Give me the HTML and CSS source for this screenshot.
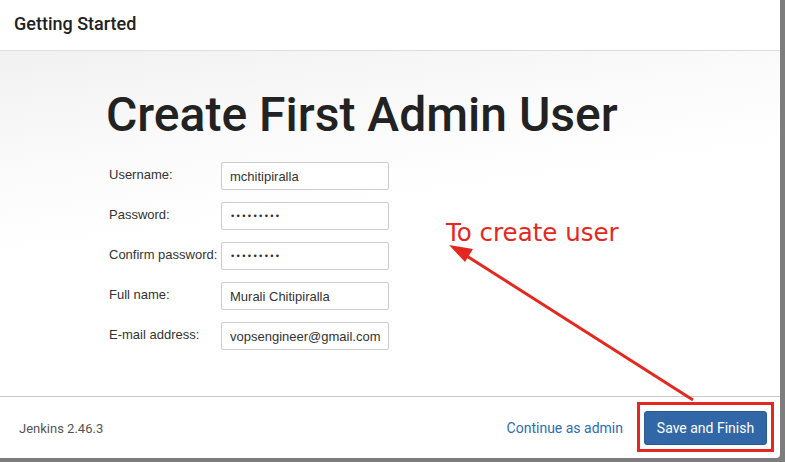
FILE: index.html
```html
<!DOCTYPE html>
<html>
<head>
<meta charset="utf-8">
<link rel="stylesheet" href="styles.css">
</head>
<body>
<div class="dialog">
  <div class="header">Getting Started</div>
  <div class="content">
    <h1 class="title">Create First Admin User</h1>
    <div class="form">
      <div class="row"><label>Username:</label><div class="input">mchitipiralla</div></div>
      <div class="row"><label>Password:</label><div class="input dots">•••••••••</div></div>
      <div class="row"><label>Confirm password:</label><div class="input dots">•••••••••</div></div>
      <div class="row"><label>Full name:</label><div class="input">Murali Chitipiralla</div></div>
      <div class="row"><label>E-mail address:</label><div class="input">vopsengineer@gmail.com</div></div>
    </div>
  </div>
  <div class="footer">
    <span class="version">Jenkins 2.46.3</span>
    <span class="spacer"></span>
    <a class="link">Continue as admin</a>
    <button class="btn">Save and Finish</button>
  </div>
</div>
<div class="note">To create user</div>
<svg class="overlay" width="785" height="462" viewBox="0 0 785 462">
  <rect x="638.5" y="403.5" width="134" height="47" fill="none" stroke="#e5281f" stroke-width="3"/>
  <line x1="693" y1="400" x2="462" y2="253" stroke="#e5281f" stroke-width="3"/>
  <polygon points="449,245 473,249 465,262" fill="#e5281f"/>
</svg>
</body>
</html>
```
FILE: styles.css
```css
html, body {
  margin: 0;
  padding: 0;
}
body {
  width: 785px;
  height: 462px;
  background: #7d7d7d;
  position: relative;
  overflow: hidden;
  font-family: "Liberation Sans", Arial, sans-serif;
}
.dialog {
  width: 780px;
  height: 458px;
  background: #fff;
  display: flex;
  flex-direction: column;
  border-bottom-right-radius: 4px;
  overflow: hidden;
}
.header {
  height: 51px;
  box-sizing: border-box;
  border-bottom: 1px solid #dedede;
  font-family: Roboto, sans-serif;
  font-weight: 500;
  font-size: 18px;
  color: #222;
  padding: 13px 0 0 14px;
  flex: none;
}
.content {
  flex: 1;
  background: linear-gradient(172deg, #f1f1f1 0%, #fafafa 25%, #ffffff 45%);
  padding: 0 0 0 107px;
  border-bottom: 1px solid #c8c8c8;
}
.title {
  margin: 35px 0 0 -1px;
  font-family: Roboto, sans-serif;
  font-weight: 500;
  font-size: 48px;
  line-height: 58px;
  color: #222;
  letter-spacing: 0;
}
.form {
  margin-top: 18px;
  display: flex;
  flex-direction: column;
  gap: 12px;
}
.row {
  display: flex;
  align-items: flex-start;
  height: 28px;
}
.row label {
  width: 112px;
  padding-left: 2px;
  font-size: 13px;
  color: #333;
  padding-top: 5px;
}
.input {
  box-sizing: border-box;
  width: 168px;
  height: 28px;
  border: 1px solid #ccc;
  border-radius: 2px;
  background: #fff;
  padding: 6px 8px;
  font-size: 13px;
  color: #333;
  white-space: nowrap;
  overflow: hidden;
}
.dots {
  font-size: 9px;
  letter-spacing: 0.3px;
  padding-top: 8px;
  font-family: "DejaVu Sans", sans-serif;
}
.footer {
  height: 61px;
  flex: none;
  display: flex;
  align-items: center;
  padding: 0 13px 0 19px;
  font-family: Roboto, sans-serif;
}
.version {
  font-size: 13px;
  color: #555;
  padding-top: 2px;
}
.spacer { flex: 1; }
.link {
  font-size: 14px;
  color: #2d6db4;
  margin-right: 21px;
}
.btn {
  width: 123px;
  height: 34px;
  background: #3167a6;
  border: 1px solid #2a5a92;
  border-radius: 3px;
  color: #fff;
  font-family: Roboto, sans-serif;
  font-size: 14px;
  padding: 0;
}
.note {
  position: absolute;
  left: 446px;
  top: 221px;
  font-family: "DejaVu Sans", Verdana, sans-serif;
  font-size: 24.5px;
  line-height: 24px;
  color: #e5281f;
}
.overlay {
  position: absolute;
  left: 0;
  top: 0;
}
```
